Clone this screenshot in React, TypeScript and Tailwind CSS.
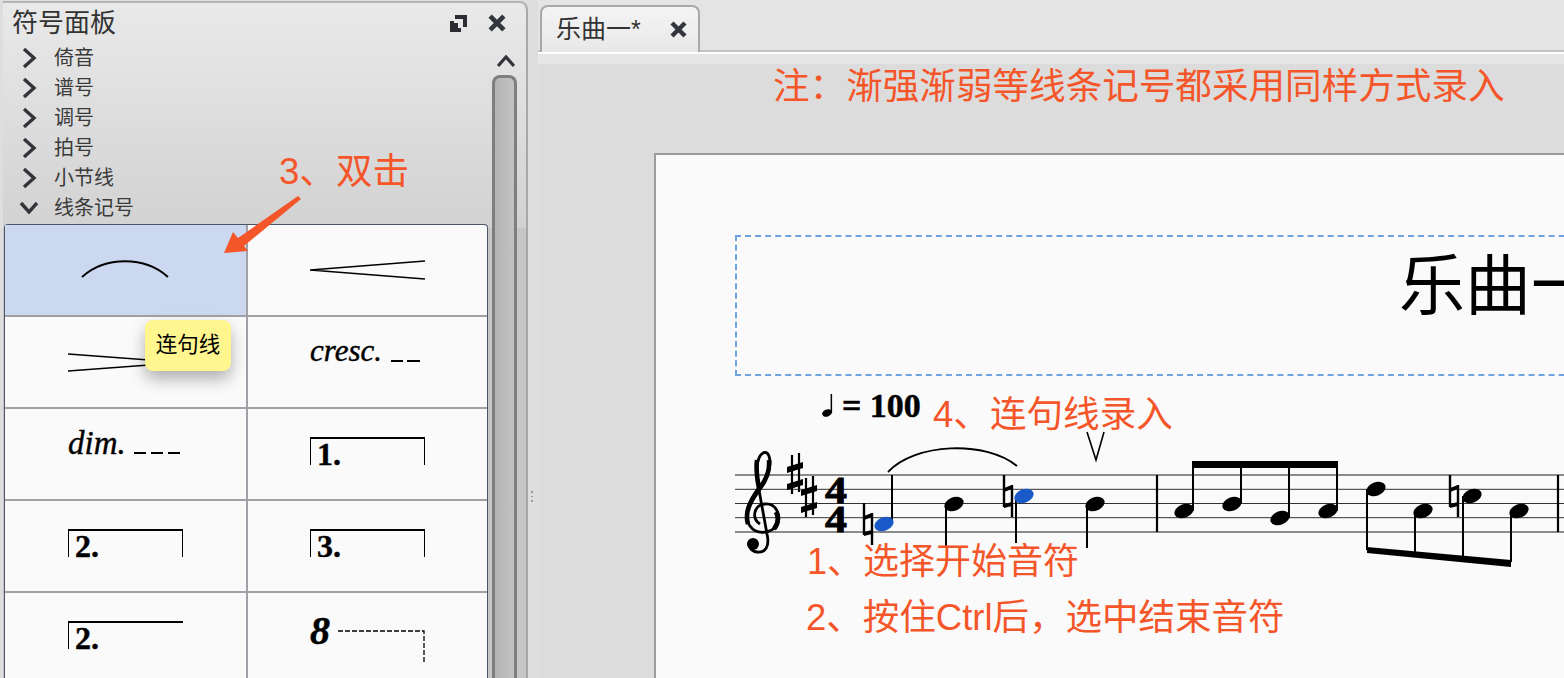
import type { ReactNode } from 'react';

const treeItems = ['倚音', '谱号', '调号', '拍号', '小节线', '线条记号'];

function Cell({ children, right, className = '' }: { children?: ReactNode; right?: boolean; className?: string }) {
  return (
    <div className={`h-[92px] border-b-2 border-[#a0a0a6] ${right ? 'border-l-2 pl-[62px]' : 'pl-[63px]'} ${className}`}>
      {children}
    </div>
  );
}

function Volta({ label, open }: { label: string; open?: boolean }) {
  return (
    <div
      className={`h-[28px] w-[115px] border-t-2 border-l-[1.5px] border-black pl-[6px] font-['Liberation_Serif',serif] text-[32px] leading-[30px] font-bold text-black [-webkit-text-stroke:0.4px_#000] ${open ? '' : 'border-r-[1.5px]'}`}
    >
      {label}
    </div>
  );
}

function Dash({ width }: { width: string }) {
  return <span className={`inline-block h-[2px] bg-black ${width}`} />;
}

function CloseIcon({ size }: { size: number }) {
  return (
    <svg viewBox="0 0 17 17" width={size} height={size} fill="none" stroke="#33363c" strokeWidth="4.4">
      <path d="M2 2L15 15M15 2L2 15" />
    </svg>
  );
}

function Chevron({ dir }: { dir: 'right' | 'down' }) {
  return (
    <svg viewBox="0 0 20 20" width="20" height="20" fill="none" stroke="#33353a" strokeWidth="3.4">
      <path d={dir === 'right' ? 'M5 1L15 10L5 19' : 'M2 5L10 14L18 5'} />
    </svg>
  );
}

function Sharp({ x, y }: { x: number; y: number }) {
  return (
    <g>
      <path d={`M${x - 3} ${y - 19}V${y + 20}M${x + 4} ${y - 21}V${y + 18}`} stroke="#000" strokeWidth="2.2" />
      <path d={`M${x - 8} ${y - 7}L${x + 8} ${y - 12}V${y - 6}L${x - 8} ${y - 1}ZM${x - 8} ${y + 10}L${x + 8} ${y + 5}V${y + 11}L${x - 8} ${y + 16}Z`} fill="#000" />
    </g>
  );
}

function Natural({ x, y }: { x: number; y: number }) {
  return (
    <g>
      <path d={`M${x} ${y - 21}V${y + 11}M${x + 8} ${y - 11}V${y + 21}`} stroke="#000" strokeWidth="2.4" />
      <path d={`M${x} ${y - 8}L${x + 8} ${y - 11}V${y - 7}L${x} ${y - 4}ZM${x} ${y + 8}L${x + 8} ${y + 6}V${y + 10}L${x} ${y + 12}Z`} fill="#000" />
    </g>
  );
}

function Head({ x, y, color = '#000' }: { x: number; y: number; color?: string }) {
  return <ellipse cx={x} cy={y} rx="10" ry="6.8" fill={color} transform={`rotate(-22 ${x} ${y})`} />;
}

function Score() {
  const stems: [number, number, number][] = [
    [892, 475, 524], [946, 504, 547], [1016, 496, 543], [1087, 504, 548],
    [1193, 461, 511], [1241, 461, 504], [1289, 461, 518], [1337, 461, 511],
    [1367, 489, 550], [1415, 511, 552], [1463, 496, 556], [1511, 511, 562],
  ];
  const heads: [number, number][] = [
    [954, 504], [1095, 504], [1184, 511], [1232, 504], [1280, 518], [1328, 511],
    [1376, 489], [1423, 511], [1472, 496], [1519, 511],
  ];
  return (
    <svg viewBox="735 430 829 150" className="block h-[150px] w-[829px]" fill="none">
      {[475, 489.3, 503.5, 517.7, 532].map((y, i) => (
        <line key={y} x1="735" x2="1564" y1={y} y2={y} stroke={i === 0 || i === 4 ? '#666' : '#333'} strokeWidth={i === 0 || i === 4 ? 1.6 : 1} />
      ))}
      {/* treble clef */}
      <path
        d="M760 524C751 518 754 505 765 504C776 503 782 516 777 525C771 534 756 535 750 526C741 513 752 496 760 486C768 476 772 466 769 456C767 451 762 451 759 458C755 467 756 478 759 490L767 534C770 547 765 553 757 552C750 551 748 545 751 542"
        stroke="#000"
        strokeWidth="2.8"
      />
      <path d="M748 524C744 511 752 499 760 488C766 480 770 470 769 460M776 512C779 518 778 524 774 529M757 460C756 468 757 478 759 488" stroke="#000" strokeWidth="4.6" />
      <circle cx="753" cy="544" r="6" fill="#000" />
      <Sharp x={795} y={474} />
      <Sharp x={809} y={497} />
      <text x="825" y="503" fill="#000" stroke="#000" strokeWidth="0.8" fontFamily="Liberation Serif, serif" fontWeight="700" fontSize="38" textLength="22" lengthAdjust="spacingAndGlyphs">4</text>
      <text x="825" y="532" fill="#000" stroke="#000" strokeWidth="0.8" fontFamily="Liberation Serif, serif" fontWeight="700" fontSize="38" textLength="22" lengthAdjust="spacingAndGlyphs">4</text>
      <Natural x={864} y={524} />
      <Natural x={1004} y={496} />
      <Natural x={1450} y={496} />
      {stems.map(([x, a, b]) => (
        <line key={x} x1={x} x2={x} y1={a} y2={b} stroke="#000" strokeWidth="2" />
      ))}
      <Head x={884} y={524} color="#1a5ac8" />
      <Head x={1024} y={496} color="#1a5ac8" />
      {heads.map(([x, y]) => (
        <Head key={x} x={x} y={y} />
      ))}
      <path d="M888 472C915 443 985 440 1017 466" stroke="#000" strokeWidth="1.9" />
      <path d="M1087 432L1096 460L1104 432" stroke="#000" strokeWidth="1.6" />
      <path d="M1157 475V532M1558 475V532" stroke="#000" strokeWidth="2.2" />
      <path d="M1192 461H1338V468H1192ZM1367 547L1511 560V567L1367 553Z" fill="#000" />
    </svg>
  );
}

const note = 'absolute leading-none whitespace-nowrap text-[#f4562a]';

export default function App() {
  return (
    <div className="relative flex h-[678px] w-[1564px] overflow-hidden bg-[#e2e2e2] font-['Liberation_Sans','Noto_Sans_CJK_SC',sans-serif]">
      {/* symbol palette */}
      <div className="w-[538px] shrink-0 bg-[#dedede] pt-[3px] pl-[3px]">
        <div className="h-[700px] w-[525px] rounded-tr-lg border-r-2 border-[#a8a8a8] bg-[linear-gradient(#e9e9e9,#d2d2d2_225px,#c6c6c6_225px)] shadow-[0_-2px_0_#b4b4b4]">
          <div className="flex h-[40px] items-center pr-[20px] pl-[9px] text-[26px] leading-none text-[#333]">
            <span className="flex-1">符号面板</span>
            <svg viewBox="0 0 17 17" className="mr-[21px] h-[17px] w-[17px]" fill="none" stroke="#2b2d33" strokeWidth="4">
              <path d="M5 2H15V12M2 6V15H11" />
              <rect x="4" y="8" width="4" height="5" fill="#2b2d33" stroke="none" />
            </svg>
            <CloseIcon size={18} />
          </div>
          <div className="flex">
            <div className="w-[485px] shrink-0">
              <ul className="h-[181px]">
                {treeItems.map((item, i) => (
                  <li key={item} className="flex h-[30px] items-center text-[20px] leading-none text-[#3a3a3a]">
                    <span className="flex w-[51px] justify-center pl-[1px]">
                      <Chevron dir={i === 5 ? 'down' : 'right'} />
                    </span>
                    <span>{item}</span>
                  </li>
                ))}
              </ul>
              <div className="ml-[1px] grid w-[484px] grid-cols-[241px_1fr] rounded-t-sm border-x border-t border-[#4c5568] bg-[#fafafa]">
                <Cell className="relative bg-[#ccd8ef]">
                  <svg width="100" height="24" viewBox="77 258 100 24" className="absolute top-[32px] left-[72px]" fill="none">
                    <path d="M82 278C105 257 145 257 168 278" stroke="#000" strokeWidth="1.8" />
                  </svg>
                </Cell>
                <Cell right>
                  <svg width="118" height="24" viewBox="309 257 118 24" className="mt-[33px]" fill="none" stroke="#000" strokeWidth="1.6">
                    <path d="M424 260L309 269L424 278" />
                  </svg>
                </Cell>
                <Cell>
                  <svg width="118" height="24" viewBox="67 349 118 24" className="mt-[33px]" fill="none" stroke="#000" strokeWidth="1.6">
                    <path d="M67 353L182 361.5L67 370" />
                  </svg>
                </Cell>
                <Cell right>
                  <div className="flex h-[68px] items-center font-['Liberation_Serif',serif] text-[31px] text-black italic [-webkit-text-stroke:0.4px_#000]">
                    <span>cresc.</span>
                    <span className="mt-[20px] ml-[9px] flex gap-[4px]">
                      <Dash width="w-[12px]" />
                      <Dash width="w-[13px]" />
                    </span>
                  </div>
                </Cell>
                <Cell>
                  <div className="flex h-[70px] items-center font-['Liberation_Serif',serif] text-[33px] text-black italic [-webkit-text-stroke:0.4px_#000]">
                    <span>dim.</span>
                    <span className="mt-[18px] ml-[8px] flex gap-[5px]">
                      <Dash width="w-[12px]" />
                      <Dash width="w-[12px]" />
                      <Dash width="w-[12px]" />
                    </span>
                  </div>
                </Cell>
                <Cell right className="pt-[28px]"><Volta label="1." /></Cell>
                <Cell className="pt-[28px]"><Volta label="2." /></Cell>
                <Cell right className="pt-[28px]"><Volta label="3." /></Cell>
                <Cell className="pt-[28px]"><Volta label="2." open /></Cell>
                <Cell right className="pt-[16px]">
                  <div className="flex items-start">
                    <span className="font-['Liberation_Serif',serif] text-[40px] leading-[44px] font-bold text-black italic [-webkit-text-stroke:0.5px_#000]">8</span>
                    <svg width="96" height="40" viewBox="0 0 96 40" className="mt-[14px] ml-[8px]" fill="none" stroke="#000" strokeWidth="1.3" strokeDasharray="5 2">
                      <path d="M0 8H86V40" />
                    </svg>
                  </div>
                </Cell>
              </div>
            </div>
            {/* scroll bar */}
            <div className="flex flex-1 flex-col items-center">
              <svg viewBox="0 0 18 12" width="18" height="12" fill="none" stroke="#33353a" strokeWidth="3.2" className="mt-[12px] mr-[2px]">
                <path d="M1 11L9 2L17 11" />
              </svg>
              <div className="mt-[8px] mr-[5px] h-[640px] w-[25px] rounded-t-lg border-x-[3px] border-t-[3px] border-[#7e7e7e] bg-[linear-gradient(90deg,#b4b4b4,#c2c2c2)]" />
            </div>
          </div>
        </div>
      </div>

      {/* score area */}
      <div className="flex min-w-0 flex-1 flex-col">
        <div className="h-[54px] shrink-0 border-b-2 border-white bg-[#e4e4e4] pt-[5px] pl-[2px] shadow-[inset_0_-2px_0_#c4c4c4]">
          <div className="flex h-[47px] w-[160px] items-center rounded-t-lg border-x-2 border-t-2 border-[#a8a8a8] bg-[linear-gradient(#f4f4f4,#e8e8e8)] pr-[11px] pl-[14px]">
            <span className="flex-1 text-[25px] leading-none whitespace-nowrap text-[#333]">乐曲一*</span>
            <CloseIcon size={17} />
          </div>
        </div>
        <div className="h-[10px] shrink-0 bg-[#e6e6e6]" />
        <div className="flex-1 bg-[#dcdcdc] pt-[89px] pl-[116px]">
          <div className="h-[600px] border-t-2 border-l-2 border-[#9c9c9c] bg-[#fafafa] pt-[80px] pl-[79px]">
            <div className="flex h-[141px] w-[900px] items-center border-2 border-dashed border-[#6fa3e0] pb-[40px] pl-[662px] text-[66px] leading-none whitespace-nowrap text-black">
              乐曲一
            </div>
            <div className="mt-[8px] mb-[2px] ml-[87px] flex h-[44px] items-center font-['Liberation_Serif',serif] text-[34px] leading-none font-bold text-black [-webkit-text-stroke:0.5px_#000]">
              <svg width="12" height="24" viewBox="0 0 12 24" fill="#000">
                <ellipse cx="5" cy="19" rx="5" ry="3.6" transform="rotate(-22 5 19)" />
                <rect x="8.6" y="0" width="1.5" height="19" />
              </svg>
              <span className="ml-[8px]">= 100</span>
            </div>
            <Score />
          </div>
        </div>
      </div>

      {/* annotations laid over the screenshot */}
      <div className={`${note} top-[69px] left-[773px] text-[36.6px]`}>注：渐强渐弱等线条记号都采用同样方式录入</div>
      <div className={`${note} top-[154px] left-[279px] text-[36.6px]`}>3、双击</div>
      <div className={`${note} top-[397px] left-[933px] text-[36.6px]`}>4、连句线录入</div>
      <div className={`${note} top-[544px] left-[807px] text-[36px]`}>1、选择开始音符</div>
      <div className={`${note} top-[600px] left-[806px] text-[36.5px]`}>2、按住Ctrl后，选中结束音符</div>
      <svg width="90" height="66" viewBox="220 192 90 66" className="absolute top-[192px] left-[220px]">
        <path d="M224 253L233 232L238 238L298 196L301 199L244 246L248 251Z" fill="#f4562a" />
      </svg>
      <div className="absolute top-[320px] left-[145px] flex h-[51px] w-[86px] items-center justify-center rounded-lg bg-[#fff68f] text-[21.5px] leading-none text-black shadow-[0_8px_16px_rgba(0,0,0,0.3)]">
        连句线
      </div>
      <div className="absolute top-[491px] left-[531px] flex flex-col gap-[3px]">
        <span className="h-[1.5px] w-[1.5px] bg-[#999]" />
        <span className="h-[1.5px] w-[1.5px] bg-[#999]" />
        <span className="h-[1.5px] w-[1.5px] bg-[#999]" />
      </div>
    </div>
  );
}
